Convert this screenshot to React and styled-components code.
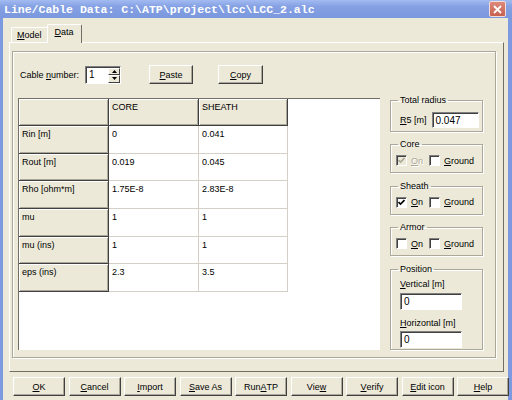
import styled, { createGlobalStyle } from 'styled-components';

const GlobalStyle = createGlobalStyle`
  html, body {
    margin: 0;
    padding: 0;
    background: #ece9d8;
  }
  body {
    font-family: "Liberation Sans", Arial, sans-serif;
    font-size: 9px;
    color: #000;
  }
`;

const Window = styled.div`
  width: 512px;
  height: 400px;
  display: flex;
  flex-direction: column;
  overflow: hidden;
  background: #ece9d8;
`;

const TitleBar = styled.div`
  height: 18px;
  flex: none;
  display: flex;
  align-items: center;
  justify-content: space-between;
  padding: 0 6px 0 4px;
  background: linear-gradient(to bottom, #a3bbf1 0%, #86a2e4 35%, #7b97de 100%);
  color: #fff;
  font-family: "Liberation Mono", monospace;
  font-weight: bold;
  font-size: 11.5px;
  white-space: nowrap;
`;

const CloseButton = styled.div`
  width: 15px;
  height: 14px;
  display: flex;
  align-items: center;
  justify-content: center;
  background: linear-gradient(to bottom, #dc8a7c, #c8604f);
  border: 1px solid #f3ddd8;
  border-radius: 2px;
`;

const Body = styled.div`
  flex: 1;
  display: flex;
  flex-direction: column;
  border-left: 3px solid #7d99df;
  border-right: 4px solid #7d99df;
  padding: 6px 0 0 6px;
`;

const TabStrip = styled.div`
  height: 18px;
  display: flex;
  align-items: flex-end;
  padding-left: 2px;
`;

const Tab = styled.div`
  position: relative;
  z-index: ${(p) => (p.$active ? 2 : 1)};
  height: ${(p) => (p.$active ? '19px' : '15px')};
  margin-bottom: ${(p) => (p.$active ? '-1px' : '0')};
  margin-left: ${(p) => (p.$active ? '-1px' : '0')};
  padding: ${(p) => (p.$active ? '2px 7px 0' : '2px 5px 0')};
  box-sizing: border-box;
  background: #ece9d8;
  border-top: 1px solid #fff;
  border-left: 1px solid #fff;
  border-right: 1px solid #716f64;
  border-radius: 2px 2px 0 0;
  line-height: 11px;
`;

const Panel = styled.div`
  width: 495px;
  height: 330px;
  box-sizing: border-box;
  display: flex;
  flex-direction: column;
  border-top: 1px solid #fff;
  border-left: 1px solid #fff;
  border-right: 1px solid #716f64;
  border-bottom: 1px solid #716f64;
`;

const InnerBox = styled.div`
  flex: 1;
  display: flex;
  flex-direction: column;
  margin: 8px 7px 14px 2px;
  padding: 13px 11px 7px 5px;
  border: 1px solid #aca899;
  box-shadow: inset 1px 1px 0 #fff, 1px 1px 0 #fff;
`;

const CableRow = styled.div`
  height: 19px;
  display: flex;
  align-items: center;
  padding-left: 2px;
`;

const U = styled.span`
  text-decoration: underline;
`;

const SpinBox = styled.div`
  margin-left: 6px;
  width: 36px;
  height: 18px;
  box-sizing: border-box;
  display: flex;
  background: #fff;
  border-top: 1px solid #808080;
  border-left: 1px solid #808080;
  border-right: 1px solid #fff;
  border-bottom: 1px solid #fff;
  box-shadow: inset 1px 1px 0 #404040;
`;

const SpinValue = styled.div`
  flex: 1;
  padding: 2px 0 0 3px;
  font-size: 10px;
`;

const SpinButtons = styled.div`
  width: 12px;
  display: flex;
  flex-direction: column;
  margin: 1px 0 0 0;
`;

const SpinButton = styled.div`
  flex: 1;
  display: flex;
  align-items: center;
  justify-content: center;
  background: #ece9d8;
  border-top: 1px solid #fff;
  border-left: 1px solid #fff;
  border-right: 1px solid #404040;
  border-bottom: 1px solid #404040;
`;

const Button = styled.div`
  width: ${(p) => p.$w || 52}px;
  height: 19px;
  box-sizing: border-box;
  margin-left: ${(p) => p.$ml || 0}px;
  display: flex;
  align-items: center;
  justify-content: center;
  background: #ece9d8;
  border-top: 1px solid #fff;
  border-left: 1px solid #fff;
  border-right: 1px solid #404040;
  border-bottom: 1px solid #404040;
  box-shadow: inset -1px -1px 0 #aca899;
  white-space: nowrap;
`;

const Main = styled.div`
  flex: 1;
  display: flex;
  gap: 10px;
  margin-top: 14px;
`;

const TableArea = styled.div`
  width: 362px;
  box-sizing: border-box;
  background: #fff;
  border-top: 1px solid #716f64;
  border-left: 1px solid #716f64;
`;

const Grid = styled.div`
  display: grid;
  grid-template-columns: 90px 90px 89px;
  grid-template-rows: 27px repeat(6, 27.7px);
  width: 269px;
`;

const HeadCell = styled.div`
  box-sizing: border-box;
  padding: 3px 3px 0;
  background: #ece9d8;
  border-right: 1px solid #404040;
  border-bottom: 1px solid #404040;
  box-shadow: inset 1px 1px 0 #fff, inset -1px -1px 0 #aca899;
  white-space: nowrap;
`;

const DataCell = styled.div`
  box-sizing: border-box;
  padding: 3px 3px 0;
  background: #fff;
  border-right: 1px solid #d4d0c8;
  border-bottom: 1px solid #d4d0c8;
  white-space: nowrap;
`;

const SideColumn = styled.div`
  width: 93px;
  display: flex;
  flex-direction: column;
  gap: 7.5px;
  margin-top: -3.5px;
`;

const Group = styled.fieldset`
  margin: 0;
  height: ${(p) => p.$h}px;
  box-sizing: border-box;
  padding: 0 3px 0 4px;
  border: 1px solid #aca899;
  box-shadow: inset 1px 1px 0 #fff, 1px 1px 0 #fff;
  min-width: 0;
`;

const Legend = styled.legend`
  margin-left: 3px;
  padding: 0 2px;
  line-height: 11px;
  font-size: 9px;
`;

const FieldRow = styled.div`
  display: flex;
  align-items: center;
  margin-top: ${(p) => p.$mt || 0}px;
  padding-left: ${(p) => p.$pl || 0}px;
`;

const TextBox = styled.div`
  width: ${(p) => p.$w}px;
  height: ${(p) => p.$h || 17}px;
  box-sizing: border-box;
  margin-left: ${(p) => p.$ml || 0}px;
  margin-top: ${(p) => p.$mt || 0}px;
  padding: 2px 0 0 3px;
  background: #fff;
  font-size: 10px;
  border-top: 1px solid #808080;
  border-left: 1px solid #808080;
  border-right: 1px solid #fff;
  border-bottom: 1px solid #fff;
  box-shadow: inset 1px 1px 0 #404040;
`;

const Check = styled.div`
  width: 11px;
  height: 11px;
  box-sizing: border-box;
  display: flex;
  align-items: center;
  justify-content: center;
  background: ${(p) => (p.$disabled ? '#ece9d8' : '#fff')};
  border-top: 1px solid #808080;
  border-left: 1px solid #808080;
  border-right: 1px solid #fff;
  border-bottom: 1px solid #fff;
  box-shadow: inset 1px 1px 0 #404040;
  margin-left: ${(p) => p.$ml || 0}px;
`;

const CheckLabel = styled.span`
  margin-left: 4px;
  color: ${(p) => (p.$disabled ? '#aca899' : '#000')};
  text-shadow: ${(p) => (p.$disabled ? '1px 1px 0 #fff' : 'none')};
`;

const Label = styled.div`
  line-height: 11px;
  margin-top: ${(p) => p.$mt || 0}px;
  padding-left: 1px;
`;

const ButtonBar = styled.div`
  width: 496px;
  display: flex;
  justify-content: space-between;
  margin: 5px 0 0 4px;
`;

const CheckMark = ({ color }) => (
  <svg width="7" height="7" viewBox="0 0 7 7">
    <path d="M0.5 3 L2.5 5 L6.5 1" stroke={color} strokeWidth="1.6" fill="none" />
  </svg>
);

const CheckBox = ({ checked, disabled, ml }) => (
  <Check $disabled={disabled} $ml={ml}>
    {checked && <CheckMark color={disabled ? '#aca899' : '#000'} />}
  </Check>
);

const Arrow = ({ up }) => (
  <svg width="5" height="3" viewBox="0 0 5 3">
    <path d={up ? 'M0 3 L2.5 0 L5 3 Z' : 'M0 0 L2.5 3 L5 0 Z'} fill="#000" />
  </svg>
);

const rows = [
  ['Rin [m]', '0', '0.041'],
  ['Rout [m]', '0.019', '0.045'],
  ['Rho [ohm*m]', '1.75E-8', '2.83E-8'],
  ['mu', '1', '1'],
  ['mu (ins)', '1', '1'],
  ['eps (ins)', '2.3', '3.5'],
];

const OnGround = ({ on, disabled }) => (
  <FieldRow $mt={5} $pl={1}>
    <CheckBox checked={on} disabled={disabled} />
    <CheckLabel $disabled={disabled}><U>O</U>n</CheckLabel>
    <CheckBox ml={6} />
    <CheckLabel><U>G</U>round</CheckLabel>
  </FieldRow>
);

const App = () => {
  return (
    <Window>
      <GlobalStyle />
      <TitleBar>
        <span>Line/Cable Data: C:\ATP\project\lcc\LCC_2.alc</span>
        <CloseButton>
          <svg width="9" height="9" viewBox="0 0 9 9">
            <path d="M1 1 L8 8 M8 1 L1 8" stroke="#fff" strokeWidth="1.8" />
          </svg>
        </CloseButton>
      </TitleBar>
      <Body>
        <TabStrip>
          <Tab><U>M</U>odel</Tab>
          <Tab $active><U>D</U>ata</Tab>
        </TabStrip>
        <Panel>
          <InnerBox>
            <CableRow>
              <span>Cable <U>n</U>umber:</span>
              <SpinBox>
                <SpinValue>1</SpinValue>
                <SpinButtons>
                  <SpinButton><Arrow up /></SpinButton>
                  <SpinButton><Arrow /></SpinButton>
                </SpinButtons>
              </SpinBox>
              <Button $w={44} $ml={28}><U>P</U>aste</Button>
              <Button $w={45} $ml={25}><U>C</U>opy</Button>
            </CableRow>
            <Main>
              <TableArea>
                <Grid>
                  <HeadCell />
                  <HeadCell>CORE</HeadCell>
                  <HeadCell>SHEATH</HeadCell>
                  {rows.map((r) => [
                    <HeadCell key={r[0]}>{r[0]}</HeadCell>,
                    <DataCell key={r[0] + 'c'}>{r[1]}</DataCell>,
                    <DataCell key={r[0] + 's'}>{r[2]}</DataCell>,
                  ])}
                </Grid>
              </TableArea>
              <SideColumn>
                <Group $h={37}>
                  <Legend>Total radius</Legend>
                  <FieldRow $mt={6} $pl={5}>
                    <span><U>R</U>5 [m]</span>
                    <TextBox $w={47} $h={16} $ml={5}>0.047</TextBox>
                  </FieldRow>
                </Group>
                <Group $h={34}>
                  <Legend>Core</Legend>
                  <OnGround on disabled />
                </Group>
                <Group $h={34}>
                  <Legend>Sheath</Legend>
                  <OnGround on />
                </Group>
                <Group $h={34}>
                  <Legend>Armor</Legend>
                  <OnGround />
                </Group>
                <Group $h={86}>
                  <Legend>Position</Legend>
                  <Label $mt={4} style={{ marginLeft: 4 }}><U>V</U>ertical [m]</Label>
                  <TextBox $w={62} $ml={5} $mt={3}>0</TextBox>
                  <Label $mt={8} style={{ marginLeft: 4 }}><U>H</U>orizontal [m]</Label>
                  <TextBox $w={62} $ml={5} $mt={2}>0</TextBox>
                </Group>
              </SideColumn>
            </Main>
          </InnerBox>
        </Panel>
        <ButtonBar>
          <Button><U>O</U>K</Button>
          <Button><U>C</U>ancel</Button>
          <Button><U>I</U>mport</Button>
          <Button><U>S</U>ave As</Button>
          <Button>Run <U>A</U>TP</Button>
          <Button>Vie<U>w</U></Button>
          <Button><U>V</U>erify</Button>
          <Button><U>E</U>dit icon</Button>
          <Button><U>H</U>elp</Button>
        </ButtonBar>
      </Body>
    </Window>
  );
};

export default App;
